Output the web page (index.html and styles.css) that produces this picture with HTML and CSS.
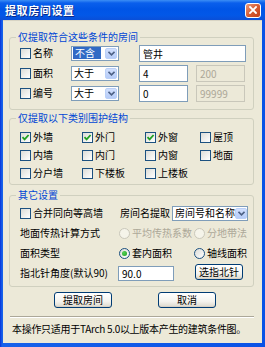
FILE: index.html
```html
<!DOCTYPE html>
<html lang="zh-CN">

<head>
    <meta charset="UTF-8">
    <meta name="viewport" content="width=device-width, initial-scale=1.0">
    <title>提取房间设置</title>
    <link rel="stylesheet" href="styles.css">
</head>

<body>
    <div class="window">
        <div class="titlebar">
            <span class="title">提取房间设置</span>
            <span class="close-btn">
                <svg width="8" height="8" viewBox="0 0 8 8"><path d="M1 1L7 7M7 1L1 7" stroke="#fff" stroke-width="1.8" stroke-linecap="square"/></svg>
            </span>
        </div>

        <div class="client">
            <!-- 条件过滤 -->
            <fieldset class="group group-filter">
                <legend>仅提取符合这些条件的房间</legend>
                <div class="filter-row">
                    <label class="check check-name"><span class="box"></span>名称</label>
                    <div class="combo combo-op"><span class="combo-text"><span class="sel">不含</span></span><span class="combo-btn"><svg width="7" height="5" viewBox="0 0 7 5"><path d="M0.5 0.8L3.5 3.8L6.5 0.8" fill="none" stroke="#4D6185" stroke-width="1.6"/></svg></span></div>
                    <div class="field field-wide">管井</div>
                </div>
                <div class="filter-row">
                    <label class="check check-name"><span class="box"></span>面积</label>
                    <div class="combo combo-op"><span class="combo-text">大于</span><span class="combo-btn"><svg width="7" height="5" viewBox="0 0 7 5"><path d="M0.5 0.8L3.5 3.8L6.5 0.8" fill="none" stroke="#4D6185" stroke-width="1.6"/></svg></span></div>
                    <div class="field field-half">4</div>
                    <div class="field field-half disabled">200</div>
                </div>
                <div class="filter-row">
                    <label class="check check-name"><span class="box"></span>编号</label>
                    <div class="combo combo-op"><span class="combo-text">大于</span><span class="combo-btn"><svg width="7" height="5" viewBox="0 0 7 5"><path d="M0.5 0.8L3.5 3.8L6.5 0.8" fill="none" stroke="#4D6185" stroke-width="1.6"/></svg></span></div>
                    <div class="field field-half">0</div>
                    <div class="field field-half disabled">99999</div>
                </div>
            </fieldset>

            <!-- 围护结构 -->
            <fieldset class="group group-walls">
                <legend>仅提取以下类别围护结构</legend>
                <div class="wall-grid">
                    <label class="check"><span class="box"><svg width="9" height="9" viewBox="0 0 9 9"><path d="M1.5 4.2L3.6 6.4L7.6 2" fill="none" stroke="#21A121" stroke-width="1.8"/></svg></span>外墙</label>
                    <label class="check"><span class="box"><svg width="9" height="9" viewBox="0 0 9 9"><path d="M1.5 4.2L3.6 6.4L7.6 2" fill="none" stroke="#21A121" stroke-width="1.8"/></svg></span>外门</label>
                    <label class="check"><span class="box"><svg width="9" height="9" viewBox="0 0 9 9"><path d="M1.5 4.2L3.6 6.4L7.6 2" fill="none" stroke="#21A121" stroke-width="1.8"/></svg></span>外窗</label>
                    <label class="check"><span class="box"></span>屋顶</label>
                    <label class="check"><span class="box"></span>内墙</label>
                    <label class="check"><span class="box"></span>内门</label>
                    <label class="check"><span class="box"></span>内窗</label>
                    <label class="check"><span class="box"></span>地面</label>
                    <label class="check"><span class="box"></span>分户墙</label>
                    <label class="check"><span class="box"></span>下楼板</label>
                    <label class="check"><span class="box"></span>上楼板</label>
                </div>
            </fieldset>

            <!-- 其它设置 -->
            <fieldset class="group group-other">
                <legend>其它设置</legend>
                <div class="other-row">
                    <label class="check cell-first"><span class="box"></span>合并同向等高墙</label>
                    <span class="name-label">房间名提取</span>
                    <div class="combo combo-name"><span class="combo-text">房间号和名称</span><span class="combo-btn"><svg width="7" height="5" viewBox="0 0 7 5"><path d="M0.5 0.8L3.5 3.8L6.5 0.8" fill="none" stroke="#4D6185" stroke-width="1.6"/></svg></span></div>
                </div>
                <div class="other-row">
                    <span class="cell-first">地面传热计算方式</span>
                    <label class="radio radio-first disabled"><span class="dot"></span>平均传热系数</label>
                    <label class="radio disabled"><span class="dot"></span>分地带法</label>
                </div>
                <div class="other-row">
                    <span class="cell-first">面积类型</span>
                    <label class="radio radio-first checked"><span class="dot"></span>套内面积</label>
                    <label class="radio"><span class="dot"></span>轴线面积</label>
                </div>
                <div class="other-row">
                    <span class="cell-first cell-angle">指北针角度(默认90)</span>
                    <div class="field field-angle">90.0</div>
                    <button type="button" class="btn btn-small">选指北针</button>
                </div>
            </fieldset>

            <div class="actions">
                <button type="button" class="btn btn-main">提取房间</button>
                <button type="button" class="btn btn-main">取消</button>
            </div>

            <div class="separator"></div>
            <div class="note">本操作只适用于TArch 5.0以上版本产生的建筑条件图。</div>
        </div>
    </div>
</body>

</html>
```

FILE: styles.css
```css
* {
    box-sizing: border-box;
}

body {
    margin: 0;
    font-family: "Noto Sans CJK SC", "Noto Sans", sans-serif;
    font-size: 10px;
    line-height: 12px;
    color: #000;
    background: #fff;
}

.window {
    width: 265px;
    height: 347px;
    display: flex;
    flex-direction: column;
    background: linear-gradient(to right, #0831D9, #1661EA 2px, #0A52E6);
}

/* 标题栏 */
.titlebar {
    height: 20px;
    flex: none;
    display: flex;
    align-items: center;
    justify-content: space-between;
    padding: 0 4px 0 5px;
    background: linear-gradient(to bottom, #3C8EF5 0, #0A5FEC 3px, #0055E6 9px, #0258E8 15px, #0A4FD8 20px);
}

.title {
    color: #fff;
    font-weight: bold;
    font-size: 11px;
    letter-spacing: 0.6px;
    text-shadow: 1px 1px 0 #0A2A8A;
}

.close-btn {
    width: 16px;
    height: 15px;
    display: flex;
    align-items: center;
    justify-content: center;
    border: 1px solid #fff;
    border-radius: 3px;
    background: linear-gradient(135deg, #EA9A7C, #D5582F 55%, #C2411A);
}

.client {
    flex: 1;
    margin: 0 3px 4px 3px;
    background: #ECE9D8;
    border-top: 1px solid #D8D4C4;
    padding-top: 10px;
}

/* 分组框 */
.group {
    margin: 0 8px 0 6px;
    padding: 0 0 6px 10px;
    border: 1px solid #D0D0BF;
    border-radius: 3px;
    min-width: 0;
}

.group legend {
    color: #0046D5;
    padding: 0 2px;
    margin-left: -4px;
    line-height: 12px;
}

.group-walls {
    margin-top: 2px;
    padding-top: 4px;
    padding-bottom: 2px;
}

.group-other {
    margin-top: 4px;
    padding-top: 2px;
    padding-bottom: 3px;
}

/* 复选框 */
.check {
    display: flex;
    align-items: center;
    gap: 2px;
    white-space: nowrap;
}

.box {
    width: 11px;
    height: 11px;
    flex: none;
    display: flex;
    align-items: center;
    justify-content: center;
    border: 1px solid #1C5180;
    background: linear-gradient(135deg, #DCDCD7, #FFFFFF);
}

/* 条件行 */
.filter-row {
    height: 20px;
    display: flex;
    align-items: center;
}

.check-name {
    width: 51px;
}

.combo {
    height: 15px;
    display: flex;
    align-items: center;
    border: 1px solid #7F9DB9;
    background: #fff;
    padding: 0 1px;
}

.combo-op {
    width: 48px;
}

.combo-name {
    width: 76px;
    margin-left: 2px;
}

.combo-text {
    flex: 1;
    white-space: nowrap;
    padding-left: 1px;
}

.sel {
    display: inline-block;
    width: 28px;
    background: #316AC5;
    color: #fff;
    padding-left: 2px;
    margin-left: -1px;
}

.combo-btn {
    width: 12px;
    height: 11px;
    flex: none;
    display: flex;
    align-items: center;
    justify-content: center;
    border-radius: 2px;
    border: 1px solid #BAD0F8;
    background: linear-gradient(to bottom, #D2E0FD, #B6CCF8);
}

.field {
    height: 17px;
    border: 1px solid #7F9DB9;
    background: #fff;
    padding: 2px 3px 0;
    white-space: nowrap;
}

.field-wide {
    width: 107px;
    margin-left: 20px;
}

.field-half {
    width: 49px;
    margin-left: 20px;
}

.field-half.disabled {
    margin-left: 8px;
    background: #ECE9D8;
    border-color: #C9C7BA;
    color: #ACA899;
}

/* 围护结构 */
.wall-grid {
    display: grid;
    grid-template-columns: 62px 63px 55px auto;
    grid-auto-rows: 18px;
    align-items: center;
}

/* 其它设置 */
.other-row {
    height: 20px;
    display: flex;
    align-items: center;
}

.cell-first {
    width: 100px;
    flex: none;
    white-space: nowrap;
}

.cell-angle {
    width: 98px;
}

.radio {
    display: flex;
    align-items: center;
    gap: 2px;
    white-space: nowrap;
}

.radio-first {
    width: 75px;
    margin-left: -1px;
}

.dot {
    width: 11px;
    height: 11px;
    flex: none;
    border-radius: 50%;
    border: 1px solid #1C5180;
    background: linear-gradient(135deg, #DCDCD7, #FFFFFF);
    display: flex;
    align-items: center;
    justify-content: center;
}

.radio.checked .dot::after {
    content: "";
    width: 5px;
    height: 5px;
    border-radius: 50%;
    background: radial-gradient(circle at 35% 35%, #55D055, #21A121);
}

.radio.disabled {
    color: #ACA899;
}

.radio.disabled .dot {
    border-color: #CAC8BB;
    background: #F5F4EA;
}

.field-angle {
    width: 56px;
    height: 15px;
    padding-top: 1px;
}

/* 按钮 */
.btn {
    font-family: inherit;
    font-size: 10px;
    line-height: 12px;
    color: #000;
    padding: 0;
    border: 1px solid #003C74;
    border-radius: 3px;
    background: linear-gradient(to bottom, #FFFFFF, #F4F3EE 60%, #DCD8CC);
    box-shadow: inset 0 -1px 0 #D6D0C5;
}

.btn-small {
    width: 48px;
    height: 16px;
    margin-left: 21px;
    margin-top: -3px;
}

.actions {
    display: flex;
    gap: 46px;
    padding-left: 51px;
    margin-top: 5px;
}

.btn-main {
    width: 58px;
    height: 16px;
}

.separator {
    margin: 8px 8px 0 7px;
    border-top: 1px solid #ACA899;
    border-bottom: 1px solid #fff;
}

.note {
    margin-top: 5px;
    padding-left: 9px;
    white-space: nowrap;
    letter-spacing: -0.3px;
}
```
